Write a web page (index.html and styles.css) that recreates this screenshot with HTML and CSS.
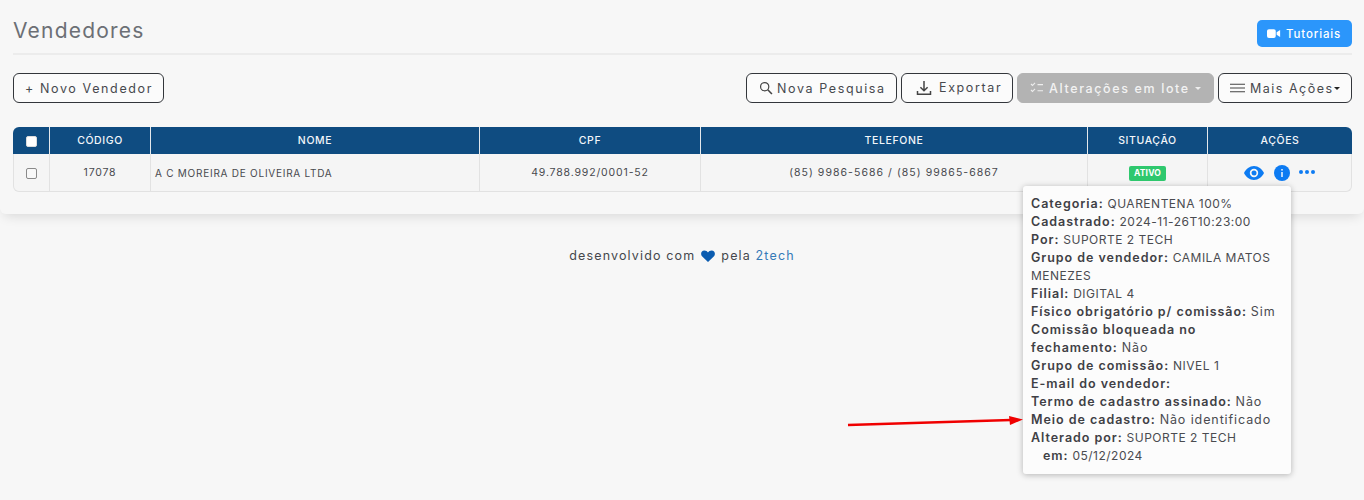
FILE: index.html
```html
<!DOCTYPE html>
<html lang="pt-BR">
<head>
<meta charset="utf-8">
<title>Vendedores</title>
<link rel="stylesheet" href="styles.css">
</head>
<body>
<main class="page">
  <section class="card">
    <header class="head">
      <h1 class="title">Vendedores</h1>
      <button class="btn-tutorial" type="button">
        <svg class="ic-video" viewBox="0 0 16 12" width="14" height="11"><rect x="0" y="1" width="10" height="10" rx="2.2" fill="#fff"/><path d="M11 4.6 15 2v8l-4-2.6z" fill="#fff"/></svg>
        Tutoriais
      </button>
    </header>
    <div class="toolbar">
      <button class="btn btn-new" type="button">+ Novo Vendedor</button>
      <div class="toolbar-right">
        <button class="btn btn-search" type="button">
          <svg viewBox="0 0 16 16" width="14" height="14" fill="none" stroke="#444" stroke-width="1.4"><circle cx="6.5" cy="6.5" r="4.7"/><path d="m10 10 4.8 4.8" stroke-width="1.8"/></svg>
          Nova Pesquisa
        </button>
        <button class="btn btn-export" type="button">
          <svg viewBox="0 0 16 16" width="16" height="16" fill="none" stroke="#444" stroke-width="1.5"><path d="M8 1v9.5M4.4 7.2 8 10.8l3.6-3.6"/><path d="M1.5 11v3.3h13V11"/></svg>
          <span class="raise">Exportar</span>
        </button>
        <button class="btn btn-off" type="button">
          <svg viewBox="0 0 14 12" width="14" height="12" fill="none" stroke="#eee" stroke-width="1.1"><path d="m1 2 1.500 1.500L5 .8M1 8l1.500 1.500L5 6.800M7.500 2.600H13M7.500 8.800H13"/></svg>
          Alterações em lote <i class="caret caret-light"></i>
        </button>
        <button class="btn btn-more" type="button">
          <svg viewBox="0 0 16 12" width="15" height="12" fill="none" stroke="#444" stroke-width="1.3"><path d="M0 2h16M0 6h16M0 10h16"/></svg>
          Mais Ações<i class="caret"></i>
        </button>
      </div>
    </div>
    <table class="grid">
      <colgroup>
        <col class="c-check"><col class="c-code"><col class="c-name"><col class="c-doc"><col class="c-phone"><col class="c-status"><col>
      </colgroup>
      <thead>
        <tr>
          <th><span class="check check-head"></span></th>
          <th>CÓDIGO</th>
          <th>NOME</th>
          <th>CPF</th>
          <th>TELEFONE</th>
          <th>SITUAÇÃO</th>
          <th>AÇÕES</th>
        </tr>
      </thead>
      <tbody>
        <tr>
          <td><span class="check"></span></td>
          <td class="code">17078</td>
          <td class="left">A C MOREIRA DE OLIVEIRA LTDA</td>
          <td class="doc">49.788.992/0001-52</td>
          <td class="phone">(85) 9986-5686 / (85) 99865-6867</td>
          <td><span class="badge">ATIVO</span></td>
          <td>
            <div class="actions">
              <svg viewBox="0 0 20 14" width="20" height="14"><path fill="#0d7bf2" fill-rule="evenodd" d="M10 0c4.400 0 8 3 10 7-2 4-5.600 7-10 7S2 11 0 7c2-4 5.600-7 10-7zm0 2.800a4.200 4.200 0 1 0 0 8.400 4.200 4.200 0 0 0 0-8.400zm0 1.700a2.500 2.500 0 1 1 0 5 2.500 2.500 0 0 1 0-5z"/></svg>
              <svg viewBox="0 0 16 16" width="16" height="16"><circle cx="8" cy="8" r="8" fill="#0d7bf2"/><rect x="7.300" y="7" width="1.400" height="5" fill="#fff"/><rect x="7.300" y="4" width="1.400" height="1.600" fill="#fff"/></svg>
              <svg class="dots" viewBox="0 0 16 4" width="16" height="4"><circle cx="2" cy="2" r="2" fill="#0d7bf2"/><circle cx="8" cy="2" r="2" fill="#0d7bf2"/><circle cx="14" cy="2" r="2" fill="#0d7bf2"/></svg>
            </div>
          </td>
        </tr>
      </tbody>
    </table>
  </section>
  <footer class="foot">
    <span>desenvolvido com</span>
    <svg viewBox="0 0 14 12" width="14" height="12"><path fill="#0b5cb0" d="M7 12 1 6.200C-.800 4.200.200.500 3.400.500 5 .500 6.300 1.400 7 2.500 7.700 1.400 9 .500 10.600.500c3.200 0 4.200 3.700 2.400 5.700z"/></svg>
    <span>pela <a class="brand" href="#">2tech</a></span>
  </footer>
  <aside class="pop">
    <p><b>Categoria:</b> QUARENTENA 100%</p>
    <p><b>Cadastrado:</b> 2024-11-26T10:23:00</p>
    <p><b>Por:</b> SUPORTE 2 TECH</p>
    <p><b>Grupo de vendedor:</b> CAMILA MATOS<br>MENEZES</p>
    <p><b>Filial:</b> DIGITAL 4</p>
    <p><b>Físico obrigatório p/ comissão:</b> <span class="lc">Sim</span></p>
    <p><b>Comissão bloqueada no<br>fechamento:</b> <span class="lc">Não</span></p>
    <p><b>Grupo de comissão:</b> NIVEL 1</p>
    <p><b>E-mail do vendedor:</b></p>
    <p><b>Termo de cadastro assinado:</b> <span class="lc">Não</span></p>
    <p><b>Meio de cadastro:</b> <span class="lc">Não identificado</span></p>
    <p><b>Alterado por:</b> SUPORTE 2 TECH</p>
    <p class="indent"><b>em:</b> 05/12/2024</p>
  </aside>
  <svg class="arrow" viewBox="0 0 180 16" width="180" height="16"><path d="M2 13 L165 8" stroke="#f00000" stroke-width="2.400" fill="none"/><path d="M163 4 L177 7.500 L164 13 z" fill="#f00000"/></svg>
</main>
</body>
</html>
```
FILE: styles.css
```css
* { box-sizing: border-box; }
html, body { margin: 0; padding: 0; }
body {
  background: #f7f7f7;
  color: #3e3e44;
  font-family: Inter, "Liberation Sans", sans-serif;
  height: 500px;
  overflow: hidden;
}
.page { position: relative; height: 500px; }
.card {
  padding: 20px 12px 22px 13px;
  height: 214px;
  border-radius: 0 0 6px 6px;
  box-shadow: 0 6px 12px -4px rgba(0, 0, 0, .13);
}
.head {
  display: flex;
  justify-content: space-between;
  align-items: flex-start;
  height: 35px;
  border-bottom: 2px solid #ececec;
}
.title {
  margin: 0;
  font-size: 21px;
  line-height: 22px;
  font-weight: 400;
  letter-spacing: 1.200px;
  color: #6c6f75;
}
.btn-tutorial {
  display: flex;
  align-items: center;
  gap: 5px;
  height: 27px;
  width: 95px;
  padding: 0 0 0 10px;
  border: 0;
  border-radius: 5px;
  background: #2b96fb;
  color: #fff;
  font: 500 11.500px Inter, "Liberation Sans", sans-serif;
  letter-spacing: .85px;
}
.toolbar {
  display: flex;
  justify-content: space-between;
  margin-top: 18px;
}
.toolbar-right { display: flex; gap: 4px; }
.btn {
  display: flex;
  align-items: center;
  gap: 4px;
  height: 30px;
  padding: 0 0 0 12px;
  border: 1px solid #33363b;
  border-radius: 6px;
  background: #fbfbfb;
  color: #47494e;
  font: 400 12.500px Inter, "Liberation Sans", sans-serif;
  letter-spacing: 1.620px;
  white-space: nowrap;
}
.btn-new { width: 151px; padding-left: 11px; }
.btn-search { width: 151px; }
.btn-export { width: 112px; gap: 7px; padding-left: 14px; }
.raise { position: relative; top: -1px; }
.btn-off {
  width: 197px;
  background: #b3b3b3;
  border-color: #b3b3b3;
  color: #f2f2f2;
  font-weight: 500;
  gap: 5px;
}
.btn-more { width: 134px; gap: 5px; padding-left: 11px; letter-spacing: 1.500px; }
.caret {
  display: inline-block;
  width: 0;
  height: 0;
  margin-left: -5px;
  border: 3px solid transparent;
  border-top-color: #222;
  border-bottom: 0;
}
.caret-light { border-top-color: #eee; margin-left: 0; }
.grid {
  width: 100%;
  margin-top: 24px;
  table-layout: fixed;
  border-collapse: separate;
  border-spacing: 0;
  font-size: 10.500px;
}
.c-check { width: 37px; }
.c-code { width: 101px; }
.c-name { width: 329px; }
.c-doc { width: 221px; }
.c-phone { width: 387px; }
.c-status { width: 120px; }
.grid th {
  height: 27px;
  padding: 0;
  background: #0f4c81;
  color: #f3f6fa;
  font-weight: 500;
  font-size: 10.500px;
  letter-spacing: .6px;
  border-right: 1px solid #e4e8ec;
}
.grid th:first-child { border-top-left-radius: 6px; }
.grid th:last-child { border-top-right-radius: 6px; border-right: 0; }
.grid td {
  height: 38px;
  padding: 0;
  text-align: center;
  letter-spacing: .55px;
  color: #48494e;
  background: #f5f5f5;
  border-right: 1px solid #e2e2e2;
  border-bottom: 1px solid #e2e2e2;
}
.grid td:first-child { border-left: 1px solid #e2e2e2; border-bottom-left-radius: 6px; }
.grid td:last-child { border-bottom-right-radius: 6px; }
.grid td.left { text-align: left; padding-left: 4px; font-size: 10px; letter-spacing: .75px; }
.grid td.code { letter-spacing: .8px; }
.grid td.doc { letter-spacing: .85px; }
.grid td.phone { letter-spacing: 1.050px; }
.check {
  display: inline-block;
  width: 11px;
  height: 11px;
  vertical-align: middle;
  background: #f8f8f8;
  border: 1px solid #8a8a8a;
  border-radius: 2px;
}
.check-head { background: #fff; border-color: #dcdcdc; }
.badge {
  display: inline-block;
  position: relative;
  top: 1px;
  padding: 0 5px;
  height: 15px;
  line-height: 15px;
  background: #2fc86e;
  color: #fff;
  font-size: 8.500px;
  font-weight: 700;
  letter-spacing: .2px;
  border-radius: 2px;
}
.actions {
  display: flex;
  justify-content: center;
  align-items: center;
  gap: 10px;
}
.dots { margin: -2px 0 0 -1px; }
.foot {
  display: flex;
  justify-content: center;
  align-items: center;
  gap: 6px;
  margin-top: 34px;
  font-size: 12.500px;
  letter-spacing: 1.150px;
  color: #45474c;
}
.brand { color: #357ab8; text-decoration: none; }
.pop {
  position: absolute;
  left: 1023px;
  top: 186px;
  width: 268px;
  padding: 9px 8px;
  background: #fcfcfc;
  border-radius: 3px;
  box-shadow: 0 1px 6px rgba(0, 0, 0, .28);
  font-size: 12px;
  line-height: 18px;
  letter-spacing: .5px;
  color: #4a4b50;
}
.pop p { margin: 0; }
.pop b { font-size: 12.500px; font-weight: 600; letter-spacing: .96px; color: #3f4045; }
.pop .lc { font-size: 12.500px; letter-spacing: .9px; }
.pop .indent { padding-left: 12px; }
.arrow {
  position: absolute;
  left: 846px;
  top: 412px;
}
```
